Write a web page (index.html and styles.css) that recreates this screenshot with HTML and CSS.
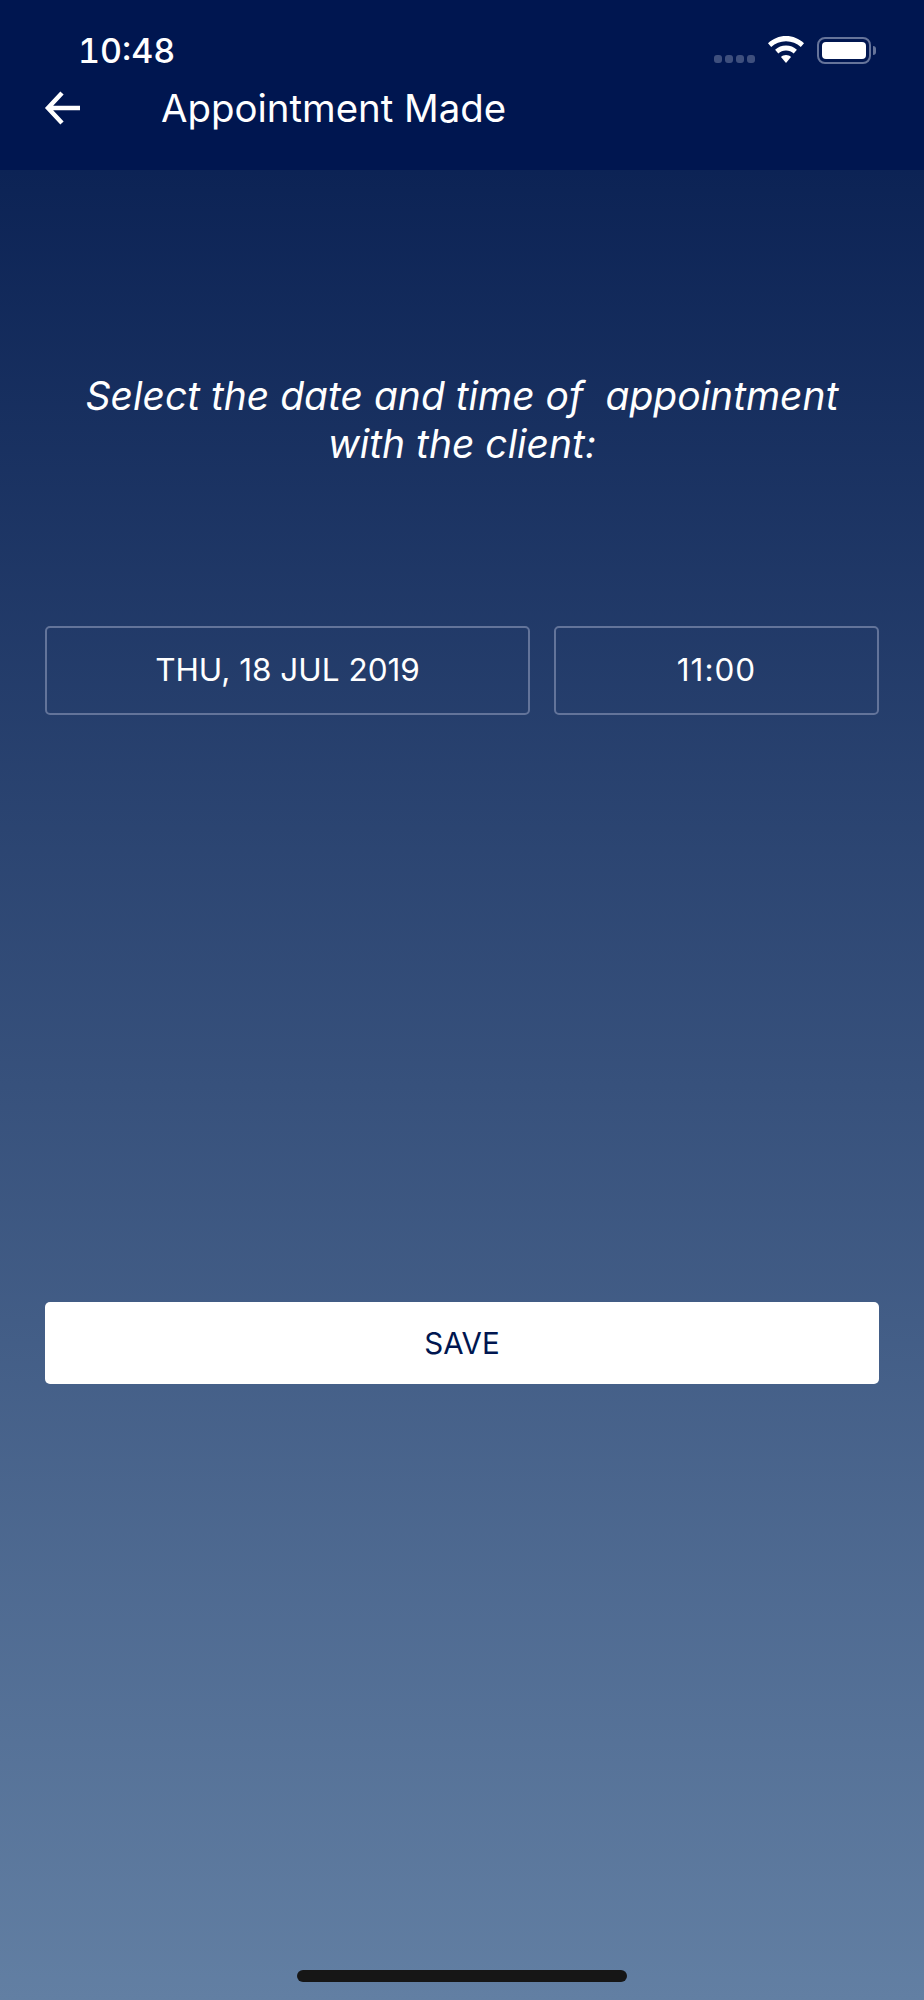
FILE: index.html
```html
<!DOCTYPE html>
<html lang="en">
<head>
    <meta charset="UTF-8">
    <meta name="viewport" content="width=device-width, initial-scale=1.0">
    <title>Appointment Made</title>
    <link rel="stylesheet" href="styles.css">
</head>
<body>
    <div class="screen">
        <header class="top-bar">
            <div class="status-bar">
                <span class="clock">10:48</span>
                <div class="status-icons">
                    <div class="signal">
                        <span class="signal-dot"></span>
                        <span class="signal-dot"></span>
                        <span class="signal-dot"></span>
                        <span class="signal-dot"></span>
                    </div>
                    <svg class="wifi" width="36" height="27" viewBox="0 0 36 27">
                        <path d="M18 0C11 0 5 2.700 0 7.200L3.200 11C7.200 7.400 12.300 5.300 18 5.300S28.800 7.400 32.800 11L36 7.200C31 2.700 25 0 18 0Z" fill="#fff"/>
                        <path d="M18 9.500C13.800 9.500 10 11.100 7.100 13.700L10.300 17.400C12.400 15.600 15 14.500 18 14.500S23.600 15.600 25.700 17.400L28.900 13.700C26 11.100 22.200 9.500 18 9.500Z" fill="#fff"/>
                        <path d="M18 19C16 19 14.300 19.700 13 20.900L18 27L23 20.900C21.700 19.700 20 19 18 19Z" fill="#fff"/>
                    </svg>
                    <div class="battery">
                        <div class="battery-body"><div class="battery-fill"></div></div>
                        <div class="battery-cap"></div>
                    </div>
                </div>
            </div>
            <div class="nav-bar">
                <svg class="back" width="36" height="36" viewBox="0 0 36 36">
                    <path d="M36 18H4M18 3L4 18L18 33" fill="none" stroke="#fff" stroke-width="4.500"/>
                </svg>
                <h1 class="nav-title">Appointment Made</h1>
            </div>
        </header>

        <main class="content">
            <p class="prompt">Select the date and time of &nbsp;appointment<br>with the client:</p>
            <div class="picker-row">
                <button class="picker picker-date">THU, 18 JUL 2019</button>
                <button class="picker picker-time">11:00</button>
            </div>
            <button class="save">SAVE</button>
            <div class="home-indicator"></div>
        </main>
    </div>
</body>
</html>
```

FILE: styles.css
```css
* {
    box-sizing: border-box;
}

body {
    margin: 0;
    font-family: Inter, "Liberation Sans", sans-serif;
    color: #fff;
}

.screen {
    width: 924px;
    height: 2000px;
    display: flex;
    flex-direction: column;
    background: #627fa3;
}

.top-bar {
    height: 170px;
    flex: none;
    background-color: #001650;
    padding: 33px 0 0 0;
}

.status-bar {
    display: flex;
    justify-content: space-between;
    align-items: center;
    padding: 0 48px 0 78px;
    height: 36px;
}

.clock {
    font-size: 34px;
    font-weight: 500;
    line-height: 36px;
    font-variant-numeric: tabular-nums;
}

.status-icons {
    display: flex;
    align-items: center;
    gap: 10px;
    margin-top: -2px;
}

.signal {
    display: flex;
    gap: 3px;
    margin-top: 18px;
    margin-right: 3px;
}

.signal-dot {
    width: 8px;
    height: 8px;
    border-radius: 3px;
    background-color: #3e4f7d;
}

.wifi {
    margin-bottom: 2px;
    margin-right: 3px;
}

.battery {
    display: flex;
    align-items: center;
    gap: 2px;
}

.battery-body {
    width: 54px;
    height: 27px;
    border: 2px solid #66749a;
    border-radius: 8px;
    padding: 3px;
}

.battery-fill {
    width: 100%;
    height: 100%;
    background-color: #fff;
    border-radius: 4px;
}

.battery-cap {
    width: 3px;
    height: 9px;
    background-color: #66749a;
    border-radius: 0 3px 3px 0;
}

.nav-bar {
    display: flex;
    align-items: center;
    padding: 17px 0 0 44px;
}

.nav-title {
    margin: 0 0 0 81px;
    font-size: 38.400px;
    font-weight: 400;
    line-height: 44px;
}

.content {
    flex: 1;
    display: flex;
    flex-direction: column;
    padding: 0 45px;
    background: linear-gradient(#0c2355, #627fa3);
}

.prompt {
    margin: 202px 0 0 0;
    font-size: 39px;
    font-style: italic;
    line-height: 48px;
    text-align: center;
}

.picker-row {
    display: flex;
    gap: 24px;
    margin-top: 158px;
}

.picker {
    height: 89px;
    border: 2px solid #63749a;
    border-radius: 5px;
    background: transparent;
    color: #fff;
    font-family: inherit;
    font-size: 31.500px;
    padding: 0 0 2px 0;
}

.picker-date {
    width: 485px;
}

.picker-time {
    width: 325px;
    letter-spacing: 1px;
}

.save {
    height: 82px;
    margin-top: 587px;
    border: none;
    border-radius: 5px;
    background-color: #fff;
    color: #001650;
    font-family: inherit;
    font-size: 29.500px;
    padding: 0;
}

.home-indicator {
    width: 330px;
    height: 12px;
    margin: auto auto 18px auto;
    border-radius: 6px;
    background-color: #161616;
}
```
